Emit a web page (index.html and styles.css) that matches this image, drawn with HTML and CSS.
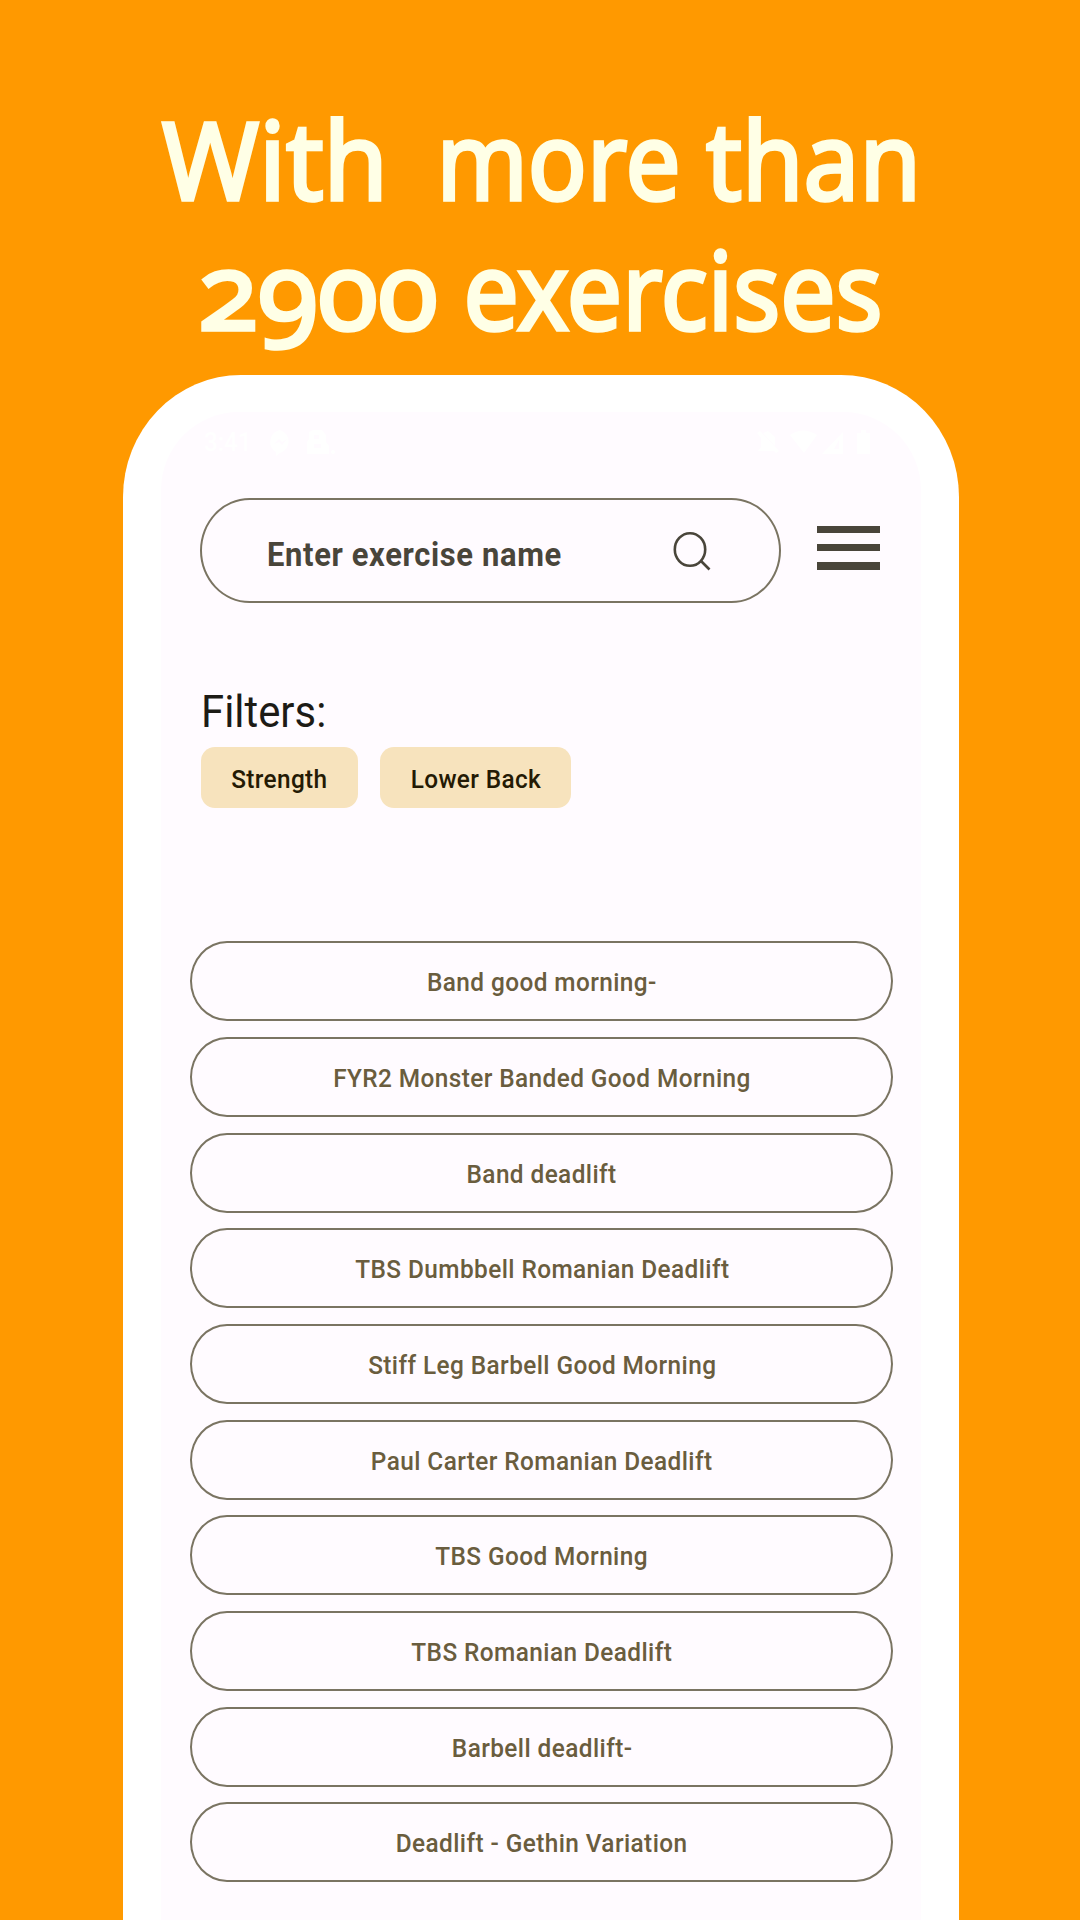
FILE: index.html
```html
<!DOCTYPE html>
<html lang="en">
<head>
<meta charset="utf-8">
<title>Exercises</title>
<link rel="stylesheet" href="styles.css">
</head>
<body>
<main class="poster">
  <h1 class="headline">
    <svg width="1080" height="375" viewBox="0 0 1080 375">
      <text x="162" y="199.5" textLength="226" lengthAdjust="spacingAndGlyphs">With</text>
      <text x="436.5" y="199.5" textLength="244" lengthAdjust="spacingAndGlyphs">more</text>
      <text x="706" y="199.5" textLength="215" lengthAdjust="spacingAndGlyphs">than</text>
      <text x="198" y="330" textLength="240" lengthAdjust="spacingAndGlyphs">2900</text>
      <text x="463.5" y="330" textLength="419" lengthAdjust="spacingAndGlyphs">exercises</text>
    </svg>
  </h1>
  <section class="phone">
    <div class="screen">
      <div class="status">
        <span class="clock">3:41</span>
        <svg class="status-left" width="68" height="28" viewBox="0 0 68 28"><path fill-rule="evenodd" d="M12 1a12 12 0 0 1 0 23l-4 3v-4A12 12 0 0 1 12 1zM6 15l5-5 3 3 5-3-5 6-3-3z"/><path fill-rule="evenodd" d="M41 3l4-2h9l4 5v7l3 4v8H39v-12l2-3zM46 6v4h5V6zM46 15v4h7v-4z"/><circle cx="65" cy="23" r="2"/></svg>
        <svg class="status-right" width="118" height="28" viewBox="0 0 118 28"><path fill-rule="evenodd" d="M2 4l3-2 19 20-3 2-2-2H3l3-4V9zM8 4l5-2 7 6v9zM35 6Q48-3 62 6L49 24zM67 25L88 3v22zM79 20h5v-9zM102 4h4V1h5v3h4v21h-13z"/></svg>
      </div>
      <div class="toolbar">
        <div class="search">
          <span class="search-text">Enter exercise name</span>
          <svg class="search-icon" width="40" height="42" viewBox="0 0 40 42"><ellipse cx="18" cy="18.5" rx="15.2" ry="16.3"/><path d="M28.5 29.5L37.5 38.5"/></svg>
        </div>
        <div class="menu"><i></i><i></i><i></i></div>
      </div>
      <h2 class="filters-title"><span>Filters:</span></h2>
      <div class="chips">
        <div class="chip chip-a"><span>Strength</span></div>
        <div class="chip chip-b"><span>Lower Back</span></div>
      </div>
      <div class="list">
        <div class="row"><span>Band good morning-</span></div>
        <div class="row"><span>FYR2 Monster Banded Good Morning</span></div>
        <div class="row"><span>Band deadlift</span></div>
        <div class="row"><span>TBS Dumbbell Romanian Deadlift</span></div>
        <div class="row"><span>Stiff Leg Barbell Good Morning</span></div>
        <div class="row"><span>Paul Carter Romanian Deadlift</span></div>
        <div class="row"><span>TBS Good Morning</span></div>
        <div class="row"><span>TBS Romanian Deadlift</span></div>
        <div class="row"><span>Barbell deadlift-</span></div>
        <div class="row"><span>Deadlift - Gethin Variation</span></div>
      </div>
    </div>
  </section>
</main>
</body>
</html>
```
FILE: styles.css
```css
* { box-sizing: border-box; margin: 0; padding: 0; }
body { width: 1080px; height: 1920px; overflow: hidden; background: #ff9900; font-family: Roboto, "Liberation Sans", sans-serif; }
.poster { height: 1920px; overflow: hidden; display: flex; flex-direction: column; align-items: center; }
.headline { height: 375px; flex: none; font-weight: 400; }
.headline svg { display: block; }
.headline text { font-family: "Noto Sans", sans-serif; font-size: 107px; font-weight: 400; fill: #ffffe6; stroke: #ffffe6; stroke-width: 3.6px; font-feature-settings: "onum" 1; }
.phone { width: 836px; flex: none; height: 1545px; margin-left: 2px; padding: 37px 38px 0; background: #fff; border-radius: 118px 118px 0 0 / 122px 122px 0 0; }
.screen { height: 1508px; background: #fffbff; border-radius: 78px 78px 0 0; }
.screen span { display: inline-block; white-space: nowrap; }
.status { height: 86px; padding: 17px 48px 0 43px; display: flex; color: #fff; }
.status svg { fill: #fff; }
.clock { width: 64px; font-size: 26px; line-height: 26px; font-weight: 500; transform: scaleX(.93); transform-origin: 0 50%; }
.status-right { margin-left: auto; }
.toolbar { height: 106px; padding: 0 41px 0 39px; display: flex; justify-content: space-between; }
.search { width: 581px; height: 105px; border: 2px solid #7a7462; border-radius: 50px / 53px; display: flex; justify-content: space-between; padding: 0 67px 0 65px; }
.search-text { font-size: 33.5px; line-height: 40px; font-weight: 700; color: #49453a; margin-top: 35px; letter-spacing: .7px; transform: scaleX(.923); transform-origin: 0 50%; }
.search-icon { margin-top: 31px; fill: none; stroke: #49453a; stroke-width: 2.6; }
.menu { width: 63px; padding-top: 28px; display: flex; flex-direction: column; gap: 11px; }
.menu i { display: block; height: 7.2px; background: #49453a; }
.filters-title { height: 143px; padding: 82px 0 0 40px; font-size: 45px; line-height: 52px; font-weight: 400; color: #1d1b16; }
.filters-title span { transform: scaleX(.93); transform-origin: 0 50%; }
.chips { display: flex; gap: 22px; padding-left: 40px; height: 194px; }
.chip { height: 61px; border-radius: 14px; background: #f7e3bd; color: #241a04; font-size: 26.5px; line-height: 63px; font-weight: 500; display: flex; justify-content: center; }
.chip span { transform: scaleX(.92); letter-spacing: .4px; }
.chip-a { width: 157px; }
.chip-b { width: 191px; }
.list { padding: .2px 28.5px 0 29px; display: flex; flex-direction: column; gap: 15.7px; }
.row { height: 80px; flex: none; border: 2px solid #7a7462; border-radius: 37px / 40px; display: flex; justify-content: center; padding-left: 1.5px; font-size: 26.5px; line-height: 78.6px; font-weight: 500; color: #6a5d3e; }
.row span { transform: scaleX(.92); letter-spacing: .45px; }
```
